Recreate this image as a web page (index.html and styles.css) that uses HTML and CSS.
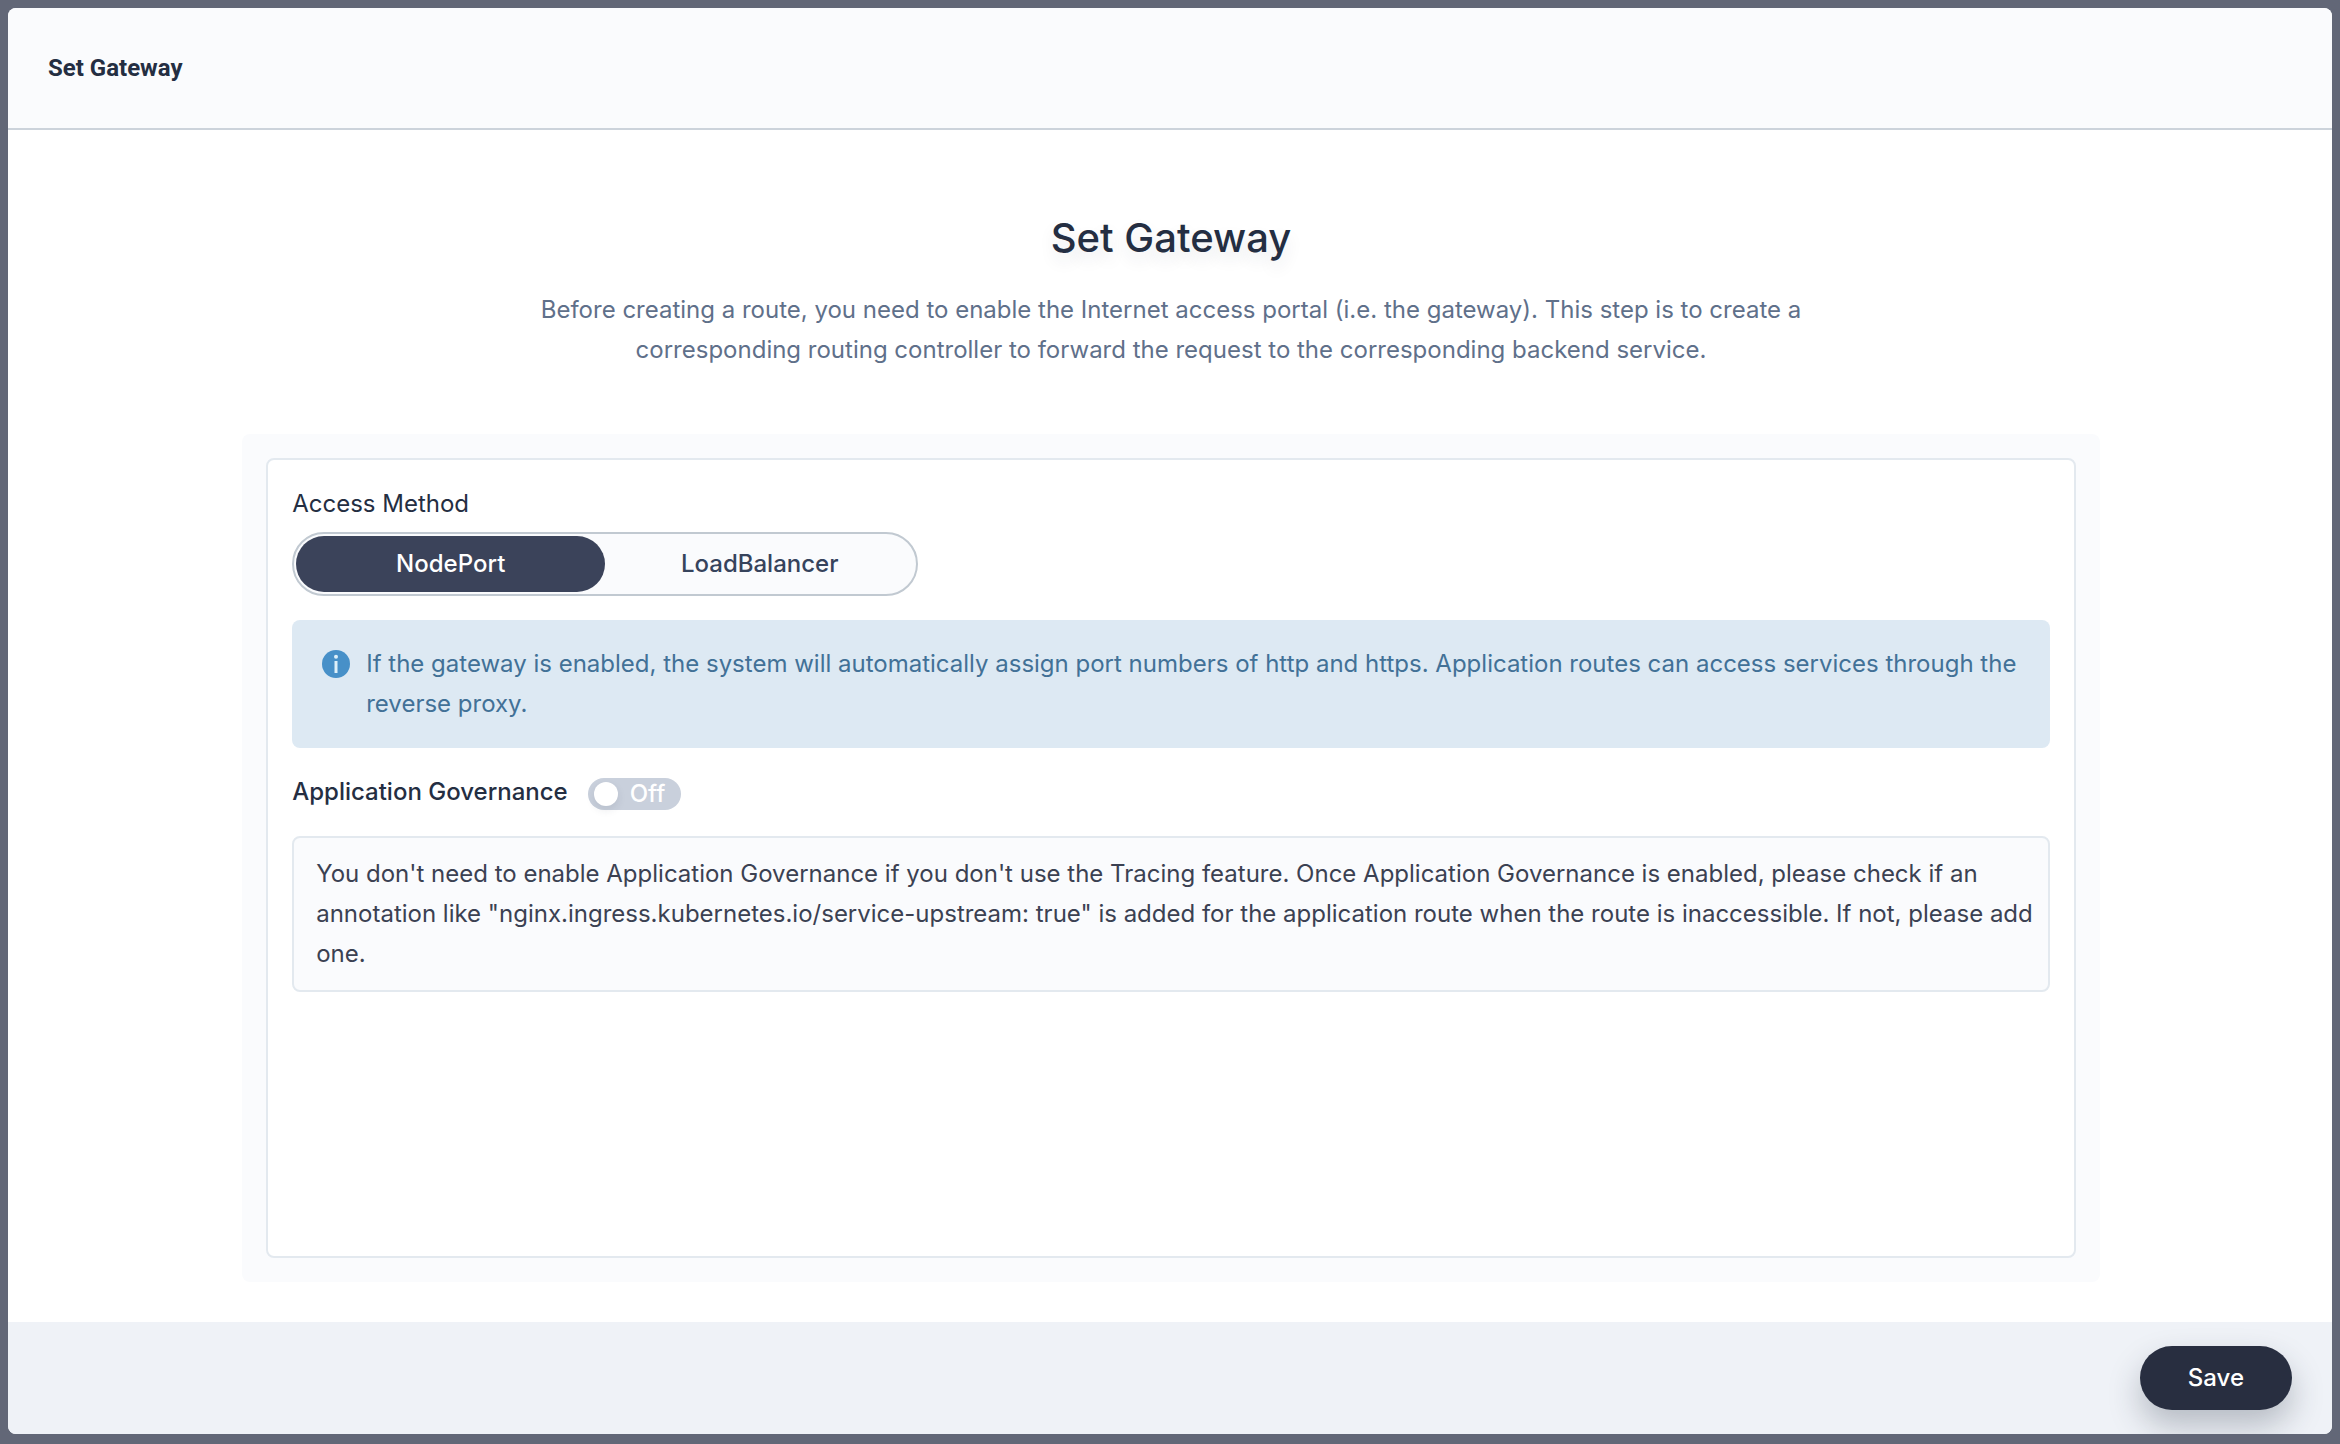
FILE: index.html
```html
<!DOCTYPE html>
<html lang="en">
<head>
  <meta charset="utf-8">
  <meta name="viewport" content="width=device-width, initial-scale=1">
  <title>Set Gateway</title>
  <link rel="stylesheet" href="styles.css">
</head>
<body>
  <form class="modal" role="dialog" aria-labelledby="modal-title">
    <header class="modal-header">
      <h1 class="modal-title" id="modal-title">Set Gateway</h1>
    </header>

    <main class="modal-body">
      <div class="intro">
        <h2 class="intro-title">Set Gateway</h2>
        <p class="intro-text">Before creating a route, you need to enable the Internet access portal (i.e. the gateway). This step is to create a corresponding routing controller to forward the request to the corresponding backend service.</p>
      </div>

      <div class="panel">
        <div class="panel-content">
          <fieldset class="field">
            <legend class="field-label">Access Method</legend>
            <div class="segmented">
              <label class="segment">
                <input class="segment-input" type="radio" name="method" value="NodePort" checked>
                <span class="segment-text">NodePort</span>
              </label>
              <label class="segment">
                <input class="segment-input" type="radio" name="method" value="LoadBalancer">
                <span class="segment-text">LoadBalancer</span>
              </label>
            </div>
          </fieldset>

          <div class="notice">
            <svg class="notice-icon" viewBox="0 0 40 40" aria-hidden="true">
              <circle cx="20" cy="20" r="14" fill="#4790c8"/>
              <circle cx="20" cy="12.7" r="2" fill="#def0f9"/>
              <rect x="18.5" y="17" width="3" height="12" fill="#def0f9"/>
            </svg>
            <p class="notice-text">If the gateway is enabled, the system will automatically assign port numbers of http and https. Application routes can access services through the reverse proxy.</p>
          </div>

          <div class="toggle-row">
            <label class="toggle-label" for="governance">Application Governance</label>
            <label class="switch">
              <input class="switch-knob" id="governance" type="checkbox">
              <span>Off</span>
            </label>
          </div>

          <p class="hint">You don't need to enable Application Governance if you don't use the Tracing feature. Once Application Governance is enabled, please check if an annotation like "nginx.ingress.kubernetes.io/service-upstream: true" is added for the application route when the route is inaccessible. If not, please add one.</p>
        </div>
      </div>
    </main>

    <footer class="modal-footer">
      <button class="save" type="button">Save</button>
    </footer>
  </form>
</body>
</html>
```
FILE: styles.css
```css
* {
  box-sizing: border-box;
}

body {
  display: flex;
  min-height: 100vh;
  margin: 0;
  padding: 8px 8px 10px;
  background: #626777;
  color: #242e42;
  font: 400 24px/40px Inter, "Liberation Sans", sans-serif;
}

h1,
h2,
p {
  margin: 0;
}

.modal {
  display: flex;
  flex: 1;
  flex-direction: column;
  overflow: hidden;
  border-radius: 8px;
  background: #fff;
}

.modal-header {
  padding: 40px;
  border-bottom: 2px solid #ccd3db;
  background: #fafbfd;
}

.modal-title {
  font: 700 24px/40px Roboto, "Liberation Sans", sans-serif;
}

.modal-body {
  display: flex;
  flex: 1;
  flex-direction: column;
  align-items: center;
  gap: 64px;
  padding: 80px 0 40px 2px;
}

.intro {
  max-width: 1360px;
  text-align: center;
}

.intro-title {
  margin-bottom: 24px;
  font-size: 40px;
  font-weight: 500;
  line-height: 56px;
  text-shadow: 0 8px 16px rgba(35, 45, 65, 0.1);
}

.intro-text {
  color: #5f708a;
}

.panel {
  display: flex;
  flex: 1;
  width: 80%;
  padding: 24px;
  border-radius: 8px;
  background: #fafbfd;
}

.panel-content {
  flex: 1;
  padding: 24px;
  border: 2px solid #e3e9ef;
  border-radius: 8px;
  background: #fff;
}

.field {
  min-width: 0;
  margin: 0;
  padding: 0;
  border: 0;
}

.field-label {
  padding: 0;
  margin-bottom: 8px;
}

.segmented {
  display: inline-flex;
  height: 64px;
  padding: 2px;
  border: 2px solid #c1c9d1;
  border-radius: 32px;
  background: #fafbfd;
  vertical-align: top;
}

.segment {
  position: relative;
  display: flex;
  align-items: center;
  justify-content: center;
  width: 309px;
  border-radius: 28px;
  color: #36435c;
  font-weight: 500;
}

.segment:has(:checked) {
  background: #3b435a;
  color: #fff;
}

.segment-input {
  position: absolute;
  inset: 0;
  margin: 0;
  opacity: 0;
}

.notice {
  display: flex;
  gap: 10px;
  margin-top: 24px;
  padding: 24px;
  border-radius: 8px;
  background: #dde9f3;
  color: #427197;
}

.notice-icon {
  flex: none;
  width: 40px;
  height: 40px;
}

.toggle-row {
  display: flex;
  align-items: center;
  gap: 20px;
  margin: 24px 0;
}

.toggle-label {
  font-weight: 500;
}

.switch {
  display: flex;
  align-items: center;
  gap: 12px;
  height: 32px;
  margin-top: 4px;
  padding: 0 16px 0 6px;
  border-radius: 16px;
  background: #c9d0dc;
  color: #fff;
  font-weight: 500;
}

.switch-knob {
  appearance: none;
  width: 24px;
  height: 24px;
  margin: 0;
  border-radius: 50%;
  background: #fff;
  box-shadow: 0 4px 8px rgba(36, 46, 66, 0.1);
}

.hint {
  padding: 16px 12px 16px 22px;
  border: 2px solid #e3e9ef;
  border-radius: 8px;
  background: #fafbfd;
  color: #3b4152;
}

.modal-footer {
  display: flex;
  justify-content: flex-end;
  padding: 24px 40px;
  background: #eff2f7;
}

.save {
  height: 64px;
  padding: 0 48px;
  border: 0;
  border-radius: 32px;
  background: #282e40;
  box-shadow: 0 16px 32px rgba(36, 46, 66, 0.28);
  color: #fff;
  font: inherit;
  font-weight: 500;
}
```
